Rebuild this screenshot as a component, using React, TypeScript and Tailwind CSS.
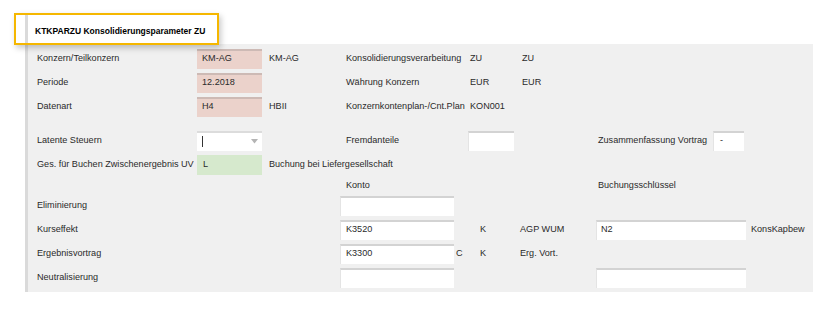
import React from "react";

const font = { fontFamily: '"Liberation Sans", Arial, sans-serif' };

function Field({
  w,
  value,
  tone = "white",
  pl = "pl-[5px]",
}: {
  w: string;
  value?: string;
  tone?: "white" | "pink" | "green";
  pl?: string;
}) {
  const bg =
    tone === "pink"
      ? "bg-[#ebd2cb] border-t-[2px] border-[#cdbab5]"
      : tone === "green"
      ? "bg-[#d6e9cd] border-t-[2px] border-[#d6e9cd]"
      : "bg-white border-t-[2px] border-[#d3d3d3] border-l border-l-[#e4e4e4]";
  return (
    <div className={`${w} h-[20px] shrink-0 flex items-center pb-[2px] ${pl} ${bg}`}>
      <span>{value}</span>
    </div>
  );
}

export default function App() {
  return (
    <div
      className="relative w-[839px] h-[312px] bg-white text-[9.1px] text-[#2a2a2a]"
      style={font}
    >
      <div className="pt-[15px] pl-[25px]">
        <div className="w-[788px] border-l-[3px] border-[#dadada]">
          <div className="h-[29px] bg-white flex items-center pl-[7px] pt-[3px]">
            <span className="font-bold text-[8.5px] text-black">
              KTKPARZU Konsolidierungsparameter ZU
            </span>
          </div>
          <div className="bg-[#f0f0f0] h-[248px] pt-[5px] flex flex-col">
            {/* Row 1 */}
            <div className="flex items-center h-[20px]">
              <div className="w-[169px] shrink-0 pl-[9px]">Konzern/Teilkonzern</div>
              <Field w="w-[65px]" value="KM-AG" tone="pink" />
              <div className="w-[84px] shrink-0 pl-[7px]">KM-AG</div>
              <div className="w-[124px] shrink-0">Konsolidierungsverarbeitung</div>
              <div className="w-[52px] shrink-0">ZU</div>
              <div className="w-[76px] shrink-0">ZU</div>
            </div>
            {/* Row 2 */}
            <div className="flex items-center h-[20px] mt-[4px]">
              <div className="w-[169px] shrink-0 pl-[9px]">Periode</div>
              <Field w="w-[65px]" value="12.2018" tone="pink" />
              <div className="w-[84px] shrink-0 pl-[7px]"></div>
              <div className="w-[124px] shrink-0">Währung Konzern</div>
              <div className="w-[52px] shrink-0">EUR</div>
              <div className="w-[76px] shrink-0">EUR</div>
            </div>
            {/* Row 3 */}
            <div className="flex items-center h-[20px] mt-[4px]">
              <div className="w-[169px] shrink-0 pl-[9px]">Datenart</div>
              <Field w="w-[65px]" value="H4" tone="pink" />
              <div className="w-[84px] shrink-0 pl-[7px]">HBII</div>
              <div className="w-[124px] shrink-0 whitespace-nowrap">Konzernkontenplan-/Cnt.Plan</div>
              <div className="w-[52px] shrink-0">KON001</div>
            </div>
            {/* Row 4 */}
            <div className="flex items-center h-[20px] mt-[14px]">
              <div className="w-[169px] shrink-0 pl-[9px]">Latente Steuern</div>
              <div className="w-[65px] h-[20px] shrink-0 bg-white border-t-[2px] border-[#dcdcdc] flex items-center justify-between pl-[5px] pr-[4px] pb-[2px]">
                <div className="w-px h-[11px] bg-[#333]" />
                <svg width="7" height="5" viewBox="0 0 7 5">
                  <path d="M0 0 L7 0 L3.5 4.5 Z" fill="#b4b4b4" />
                </svg>
              </div>
              <div className="w-[84px] shrink-0" />
              <div className="w-[122px] shrink-0">Fremdanteile</div>
              <Field w="w-[46px]" />
              <div className="w-[84px] shrink-0" />
              <div className="w-[115px] shrink-0">Zusammenfassung Vortrag</div>
              <Field w="w-[31px]" value="-" pl="pl-[6px]" />
            </div>
            {/* Row 5 */}
            <div className="flex items-center h-[20px] mt-[4px]">
              <div className="w-[169px] shrink-0 pl-[9px] whitespace-nowrap">
                Ges. für Buchen Zwischenergebnis UV
              </div>
              <Field w="w-[65px]" value="L" tone="green" pl="pl-[6px]" />
              <div className="shrink-0 pl-[7px]">Buchung bei Liefergesellschaft</div>
            </div>
            {/* Konto header */}
            <div className="flex items-center h-[21px]">
              <div className="w-[318px] shrink-0" />
              <div className="w-[252px] shrink-0">Konto</div>
              <div className="shrink-0">Buchungsschlüssel</div>
            </div>
            {/* Eliminierung */}
            <div className="flex items-center h-[20px]">
              <div className="w-[312px] shrink-0 pl-[9px]">Eliminierung</div>
              <Field w="w-[114px]" />
            </div>
            {/* Kurseffekt */}
            <div className="flex items-center h-[20px] mt-[4px]">
              <div className="w-[312px] shrink-0 pl-[9px]">Kurseffekt</div>
              <Field w="w-[114px]" value="K3520" />
              <div className="w-[26px] shrink-0 pl-[2px]"></div>
              <div className="w-[40px] shrink-0">K</div>
              <div className="w-[76px] shrink-0">AGP WUM</div>
              <Field w="w-[150px]" value="N2" pl="pl-[4px]" />
              <div className="shrink-0 pl-[5px]">KonsKapbew</div>
            </div>
            {/* Ergebnisvortrag */}
            <div className="flex items-center h-[20px] mt-[4px]">
              <div className="w-[312px] shrink-0 pl-[9px]">Ergebnisvortrag</div>
              <Field w="w-[114px]" value="K3300" />
              <div className="w-[26px] shrink-0 pl-[2px]">C</div>
              <div className="w-[40px] shrink-0">K</div>
              <div className="w-[76px] shrink-0">Erg. Vort.</div>
            </div>
            {/* Neutralisierung */}
            <div className="flex items-center h-[20px] mt-[4px]">
              <div className="w-[312px] shrink-0 pl-[9px]">Neutralisierung</div>
              <Field w="w-[114px]" />
              <div className="w-[142px] shrink-0" />
              <Field w="w-[150px]" />
            </div>
          </div>
        </div>
      </div>
      {/* highlight annotation */}
      <div className="absolute left-[14px] top-[13px] w-[205px] h-[32px] border-2 border-[#f5b700] shadow-[2px_3px_6px_rgba(0,0,0,0.22)] pointer-events-none" />
    </div>
  );
}
